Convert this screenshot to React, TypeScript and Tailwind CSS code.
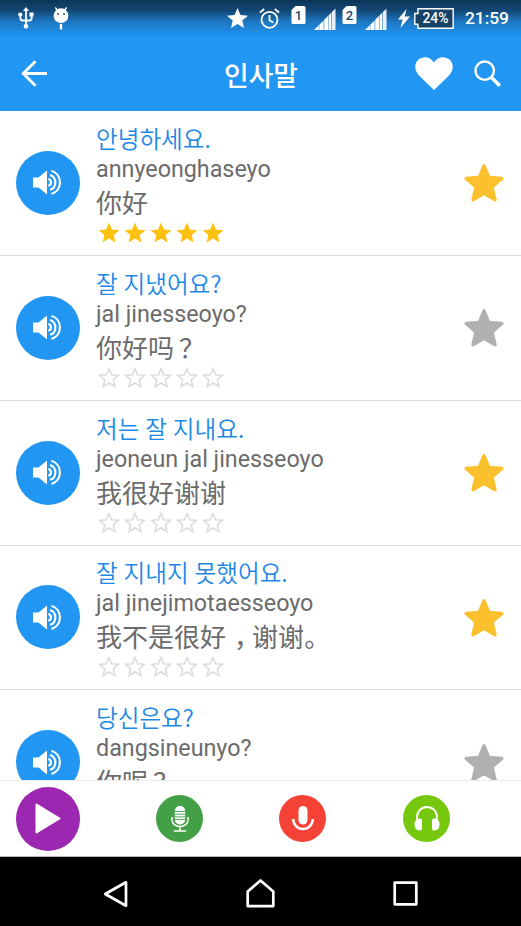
import { clsx } from 'clsx';

type Phrase = {
  korean: string;
  roman: string;
  chinese: string;
  rating: number;
  favorite: boolean;
};

const phrases: Phrase[] = [
  { korean: '안녕하세요.', roman: 'annyeonghaseyo', chinese: '你好', rating: 5, favorite: true },
  { korean: '잘 지냈어요?', roman: 'jal jinesseoyo?', chinese: '你好吗？', rating: 0, favorite: false },
  { korean: '저는 잘 지내요.', roman: 'jeoneun jal jinesseoyo', chinese: '我很好谢谢', rating: 0, favorite: true },
  { korean: '잘 지내지 못했어요.', roman: 'jal jinejimotaesseoyo', chinese: '我不是很好，谢谢。', rating: 0, favorite: true },
  { korean: '당신은요?', roman: 'dangsineunyo?', chinese: '你呢？', rating: 0, favorite: false },
];

const STAR = 'M12 17.27 18.18 21l-1.64-7.03L22 9.24l-7.19-.61L12 2 9.19 8.63 2 9.24l5.46 4.73L5.82 21z';

const SimIcon = ({ label }: { label: string }) => (
  <svg viewBox="0 0 15 18" className="h-[18px] w-[15px]">
    <path d="M4.5 0H13a1.5 1.5 0 0 1 1.5 1.5v15A1.5 1.5 0 0 1 13 18H2a1.5 1.5 0 0 1-1.5-1.5V4z" fill="#fff" />
    <text x="7.5" y="13.6" textAnchor="middle" fontSize="13" fontFamily="Roboto" fontWeight="500" fill="#17466f">
      {label}
    </text>
  </svg>
);

const SignalIcon = () => (
  <svg viewBox="0 0 22 22" className="h-[22px] w-[22px]" fill="#fff">
    <path d="M0 22l4.8-4.8V22zM5.3 16.7l4.3-4.3V22H5.3zM10.2 11.8l3.8-3.8V22h-3.8zM14.5 7.5 17.2 4.800V22h-2.700z" />
    <path d="M17.700 4.300 21.500.5V22h-3.800z" fillOpacity=".9" />
  </svg>
);

const StatusBar = () => (
  <div className="flex h-9 items-center pl-[18px] pr-3">
    <svg viewBox="0 0 16 22" className="h-[22px] w-4" fill="none" stroke="#fff" strokeWidth="1.8">
      <path d="M8 3v16M2.300 7v4q0 2.500 2.500 2.500h6.400q2.500 0 2.500-2.500V7" />
      <path d="M8 0l3 4H5zM11.500 5.500h4v4h-4zM5.600 19.300a2.400 2.400 0 1 0 4.800 0 2.400 2.400 0 1 0-4.800 0" fill="#fff" stroke="none" />
      <circle cx="2.3" cy="7.5" r="2.1" fill="#fff" stroke="none" />
    </svg>
    <svg viewBox="0 0 16 23" className="ml-[19px] h-[23px] w-4">
      <circle cx="8" cy="8.7" r="7.4" fill="#fff" />
      <path d="M4.300 3 2.300.5M11.700 3l2-2.500" stroke="#fff" strokeWidth="1.3" />
      <path d="M8 17v5.500" stroke="#fff" strokeWidth="2.4" />
      <circle cx="5" cy="7" r=".9" fill="#17466f" />
      <circle cx="11" cy="7" r=".9" fill="#17466f" />
    </svg>
    <svg viewBox="2 2 20 19" className="ml-[158px] h-5 w-[21px]" fill="#fff">
      <path d={STAR} />
    </svg>
    <svg viewBox="0 0 21 21" className="ml-[11px] h-[21px] w-[21px]" fill="none" stroke="#fff" strokeWidth="1.8">
      <circle cx="10.5" cy="11.8" r="8" />
      <path d="M10.500 7v5.300l3.700 2.200M.9 4.600 5.200 1M20.100 4.600 15.800 1" />
    </svg>
    <div className="-mt-[6px] ml-[11px]"><SimIcon label="1" /></div>
    <div className="ml-2 mt-[2px]"><SignalIcon /></div>
    <div className="-mt-[6px] ml-[6px]"><SimIcon label="2" /></div>
    <div className="ml-2 mt-[2px]"><SignalIcon /></div>
    <svg viewBox="0 0 12 19" className="ml-[11px] h-[19px] w-3" fill="#fff">
      <path d="M8.500 0 0 10.500h4.600L2.500 19 12 7.500H6.800z" />
    </svg>
    <svg viewBox="0 0 40 21" className="ml-1 h-[21px] w-10">
      <path d="M4 .8h35.200v19.400H4v-4H.8V5.500H4z" fill="#164268" stroke="#fff" strokeWidth="1.4" />
      <text x="21.500" y="15.400" textAnchor="middle" fontSize="14" fontFamily="Roboto" fontWeight="500" fill="#fff">24%</text>
    </svg>
    <span className="ml-[11px] mt-px whitespace-nowrap font-[Roboto] text-[17.4px] font-medium leading-none text-white">21:59</span>
  </div>
);

const AppBar = () => (
  <div className="grid h-[75px] grid-cols-[1fr_auto_1fr] items-center pl-[21px] pr-5">
    <svg viewBox="0 0 27 27" className="h-[27px] w-[27px]" fill="none" stroke="#fff" strokeWidth="2.9">
      <path d="M14.500 1.300 2.300 13.500l12.200 12.200M2.500 13.500H26" />
    </svg>
    <h1 className="pt-[3px] font-['Noto_Sans_CJK_KR',sans-serif] text-[26.8px] font-medium leading-none text-white">인사말</h1>
    <div className="flex items-center justify-end gap-[21px]">
      <svg viewBox="0 0 38 33" className="h-[33px] w-[38px]" fill="#fff">
        <path d="M19 33 4.500 19C-1 13.500-.8 6.500 3.200 2.800 8-1.500 15.500-.4 19 5.500 22.500-.4 30-1.500 34.800 2.800c4 3.700 4.200 10.700-1.300 16.200z" />
      </svg>
      <svg viewBox="0 0 27 27" className="h-[27px] w-[27px]" fill="none" stroke="#fff">
        <circle cx="10.7" cy="10.7" r="9.2" strokeWidth="2.4" />
        <path d="m17.300 17.300 8.500 8.500" strokeWidth="3.6" />
      </svg>
    </div>
  </div>
);

const SpeakerButton = () => (
  <button className="flex h-16 w-16 shrink-0 items-center justify-center rounded-full bg-[#2196f3]">
    <svg viewBox="0 0 30 27" className="h-[27px] w-[30px]" fill="none" stroke="#fff" strokeWidth="2.2">
      <path d="M0 8.500h5.500L14 1.500v24L5.500 18.500H0z" fill="#fff" stroke="none" />
      <path d="M15.300 10a3.500 3.500 0 0 1 0 6.800M17 6a7.800 7.800 0 0 1 0 14.800M18.500 1.800a12.200 12.200 0 0 1 0 23.200" />
    </svg>
  </button>
);

// full-width marks sit in the middle of their cell, except the ideographic full stop
const ChineseText = ({ text }: { text: string }) => (
  <>
    {Array.from(text).map((char, i) => (
      <span key={i} className={clsx(char === '？' && 'relative left-[5px]', char === '，' && 'relative left-[8px]')}>
        {char}
      </span>
    ))}
  </>
);

const Rating = ({ value }: { value: number }) => (
  <div className="ml-[2px] mt-[3px] flex gap-1">
    {[1, 2, 3, 4, 5].map((n) => (
      <svg key={n} viewBox="1.500 1.500 21 20" className="h-[21px] w-[22px]">
        {n <= value ? (
          <path d={STAR} fill="#ffc110" />
        ) : (
          <path d={STAR} fill="none" stroke="#dcdcdc" strokeWidth="1.7" transform="translate(1.200 1.200) scale(.9)" />
        )}
      </svg>
    ))}
  </div>
);

const PhraseRow = ({ phrase }: { phrase: Phrase }) => (
  <li className="flex h-[144.85px] shrink-0 items-center border-b border-[#dedede] pl-4 pr-[17px]">
    <SpeakerButton />
    <div className="ml-4 flex-1 whitespace-nowrap text-[#6b6b6b]">
      <p className="font-['Noto_Sans_CJK_KR',sans-serif] text-[23.6px] font-[350] leading-[30px] text-[#1e88e5] [word-spacing:0.6px]">{phrase.korean}</p>
      <p className="font-[Roboto] text-[23.3px] leading-[32px]">{phrase.roman}</p>
      <p className="font-['Noto_Sans_CJK_SC',sans-serif] text-[26px] leading-[34px]">
        <ChineseText text={phrase.chinese} />
      </p>
      <Rating value={phrase.rating} />
    </div>
    <svg
      viewBox="0 0 40 39"
      strokeWidth="3.4"
      strokeLinejoin="round"
      className={clsx('h-[39px] w-10', phrase.favorite ? 'fill-[#fbc02d] stroke-[#fbc02d]' : 'fill-[#b0b0b0] stroke-[#b0b0b0]')}
    >
      <path d="M20 2.800l4.800 11.600 13 1.100-9.800 8.500 3 12.700L20 30.200 9 36.700 12 24 2.200 15.500l13-1.100z" />
    </svg>
  </li>
);

const PlayerBar = () => (
  <div className="flex h-[77px] items-center gap-[77px] border-b border-t border-b-[#b8b8b8] border-t-[#ececec] bg-white pl-4">
    <button className="flex h-16 w-16 items-center justify-center rounded-full bg-[#9c27b0]">
      <svg viewBox="0 0 26 31" className="h-[31px] w-[26px]" fill="#fff" stroke="#fff" strokeWidth="2" strokeLinejoin="round">
        <path d="M1.500 1.500v28l23-14z" />
      </svg>
    </button>
    <button className="-ml-px flex h-[47px] w-[47px] items-center justify-center rounded-full bg-[#43a047]">
      <svg viewBox="0 0 18 26" className="h-[26px] w-[18px]" fill="none" stroke="#fff" strokeWidth="1.5">
        <rect x="3.8" y="0" width="10.4" height="18.5" rx="5" fill="#fff" stroke="none" />
        <path d="M3.800 5.500h10.400M3.800 8.200h10.400M3.800 10.900h10.400M3.800 13.600h10.400" stroke="#43a047" strokeWidth=".9" />
        <path d="M1 11v3a8 6.500 0 0 0 16 0v-3M9 20.500V25M3 25h12" />
      </svg>
    </button>
    <button className="-ml-px flex h-[47px] w-[47px] items-center justify-center rounded-full bg-[#f44336]">
      <svg viewBox="0 0 22 25" className="h-[25px] w-[22px]" fill="none" stroke="#fff" strokeWidth="2.4">
        <rect x="6.5" y="0" width="9" height="18.5" rx="4.5" fill="#fff" stroke="none" />
        <path d="M1.200 13a9.800 10 0 0 0 19.600 0" />
      </svg>
    </button>
    <button className="flex h-[47px] w-[47px] items-center justify-center rounded-full bg-[#76c80e]">
      <svg viewBox="0 0 26 25" className="h-[25px] w-[26px]">
        <path d="M3 14v-3a10 10 0 0 1 20 0v3" fill="none" stroke="#fff" strokeWidth="1.8" />
        <path d="M2.500 13.500 5 12.500h1q2 0 2 2v8q0 2-2 2H5l-2.500-1q-2-1.500-2-5t2-5zM23.500 13.500l-2.500-1h-1q-2 0-2 2v8q0 2 2 2h1l2.500-1q2-1.500 2-5t-2-5z" fill="#fff" />
      </svg>
    </button>
  </div>
);

const NavigationBar = () => (
  <div className="flex h-[69px] items-center bg-black pl-[103px] pt-[5px]">
    <svg viewBox="0 0 26 28" className="h-7 w-[26px]" fill="none" stroke="#fff" strokeWidth="2.7" strokeLinejoin="round">
      <path d="M23 2.300v23.400L2.200 14z" />
    </svg>
    <svg viewBox="0 0 29 29" className="-mt-px ml-[117px] h-[29px] w-[29px]" fill="none" stroke="#fff" strokeWidth="2.7" strokeLinejoin="round">
      <path d="M1.700 12.500 14.500 1.500l12.800 11v14.600H1.700z" />
    </svg>
    <svg viewBox="0 0 25 25" className="-mt-px ml-[118px] h-[25px] w-[25px]" fill="none" stroke="#fff" strokeWidth="2.7" strokeLinejoin="round">
      <path d="M1.700 1.700h21.600v21.600H1.700z" />
    </svg>
  </div>
);

export default function App() {
  return (
    <div className="flex h-[926px] w-[521px] flex-col overflow-hidden bg-white">
      <header className="h-[111px] shrink-0 bg-[linear-gradient(#0d3557_0px,#134673_10px,#1d78c3_22px,#2196f3_37px)]">
        <StatusBar />
        <AppBar />
      </header>
      <ul className="flex min-h-0 flex-1 flex-col overflow-hidden">
        {phrases.map((phrase) => (
          <PhraseRow key={phrase.korean} phrase={phrase} />
        ))}
      </ul>
      <PlayerBar />
      <NavigationBar />
    </div>
  );
}
